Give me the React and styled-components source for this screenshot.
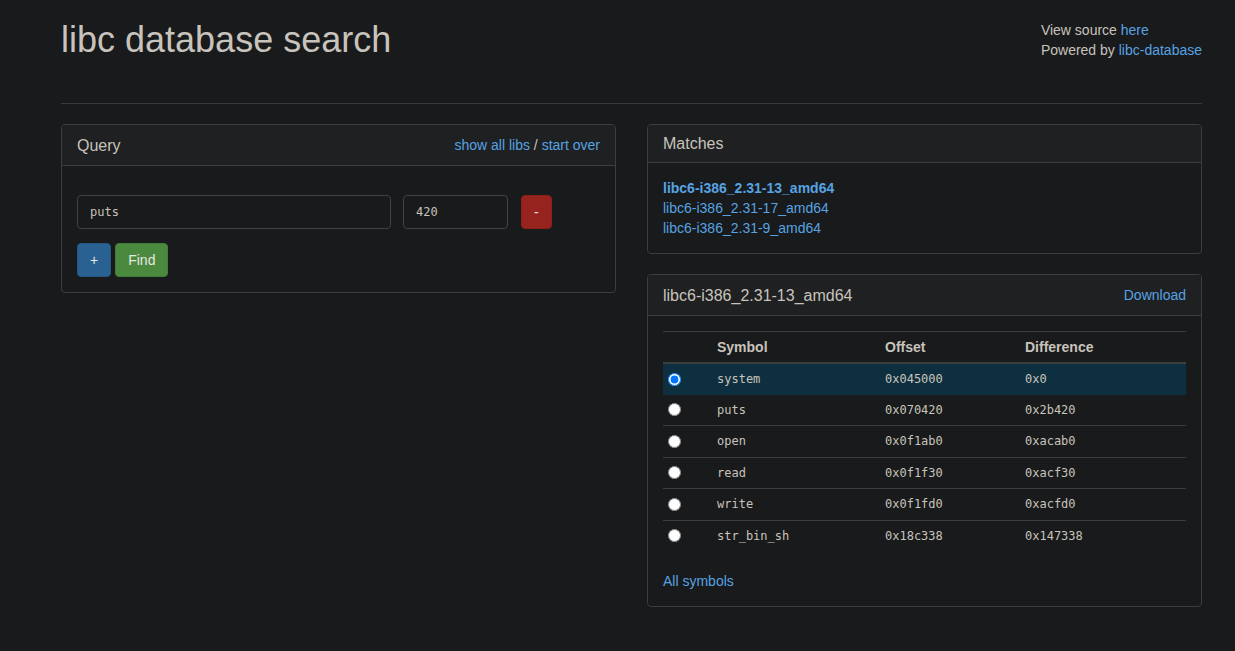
import styled, { createGlobalStyle } from 'styled-components';

const GlobalStyle = createGlobalStyle`
  body {
    margin: 0;
    background: #181a1b;
    color: #c8c3bc;
    font-family: "Liberation Sans", Arial, sans-serif;
    font-size: 14px;
    line-height: 20px;
  }
  a {
    color: #57a3e2;
    text-decoration: none;
  }
`;

const symbols = [
  { name: 'system', offset: '0x045000', diff: '0x0', selected: true },
  { name: 'puts', offset: '0x070420', diff: '0x2b420' },
  { name: 'open', offset: '0x0f1ab0', diff: '0xacab0' },
  { name: 'read', offset: '0x0f1f30', diff: '0xacf30' },
  { name: 'write', offset: '0x0f1fd0', diff: '0xacfd0' },
  { name: 'str_bin_sh', offset: '0x18c338', diff: '0x147338' },
];

const matches = ['libc6-i386_2.31-13_amd64', 'libc6-i386_2.31-17_amd64', 'libc6-i386_2.31-9_amd64'];

export default function App() {
  return (
    <>
      <GlobalStyle />
      <Container>
        <Header>
          <Title>libc database search</Title>
          <Meta>
            <div>
              View source <a href="#">here</a>
            </div>
            <div>
              Powered by <a href="#">libc-database</a>
            </div>
          </Meta>
        </Header>
        <Divider />
        <Columns>
          <div>
            <Panel>
              <PanelHeading $tall>
                <PanelTitle>Query</PanelTitle>
                <span>
                  <a href="#">show all libs</a> / <a href="#">start over</a>
                </span>
              </PanelHeading>
              <QueryBody>
                <FormRow>
                  <Input $width={314} defaultValue="puts" />
                  <Input $width={105} defaultValue="420" />
                  <Button $kind="danger">-</Button>
                </FormRow>
                <ButtonRow>
                  <Button $kind="primary">+</Button>
                  <Button $kind="success">Find</Button>
                </ButtonRow>
              </QueryBody>
            </Panel>
          </div>
          <div>
            <Panel>
              <PanelHeading>
                <PanelTitle>Matches</PanelTitle>
              </PanelHeading>
              <PanelBody>
                {matches.map((m, i) => (
                  <MatchLink key={m} href="#" $active={i === 0}>
                    {m}
                  </MatchLink>
                ))}
              </PanelBody>
            </Panel>
            <Panel>
              <PanelHeading $tall>
                <PanelTitle>libc6-i386_2.31-13_amd64</PanelTitle>
                <a href="#">Download</a>
              </PanelHeading>
              <PanelBody>
                <Table>
                  <colgroup>
                    <col style={{ width: 49 }} />
                    <col style={{ width: 168 }} />
                    <col style={{ width: 140 }} />
                    <col />
                  </colgroup>
                  <thead>
                    <tr>
                      <Th />
                      <Th>Symbol</Th>
                      <Th>Offset</Th>
                      <Th>Difference</Th>
                    </tr>
                  </thead>
                  <tbody>
                    {symbols.map((s) => (
                      <Row key={s.name} $selected={s.selected}>
                        <Td>
                          <Radio type="radio" name="sym" defaultChecked={s.selected} />
                        </Td>
                        <Td $mono>{s.name}</Td>
                        <Td $mono>{s.offset}</Td>
                        <Td $mono>{s.diff}</Td>
                      </Row>
                    ))}
                  </tbody>
                </Table>
                <AllSymbols href="#">All symbols</AllSymbols>
              </PanelBody>
            </Panel>
          </div>
        </Columns>
      </Container>
    </>
  );
}

const Container = styled.div`
  width: 1141px;
  margin-left: 61px;
`;
const Header = styled.div`
  display: flex;
  justify-content: space-between;
  align-items: flex-start;
  box-sizing: border-box;
  height: 103px;
  padding-top: 20px;
`;
const Title = styled.h1`
  margin: 0;
  font-size: 36px;
  line-height: 1.1;
  font-weight: 400;
  color: #c8c3bc;
`;
const Meta = styled.div`
  font-size: 14px;
  line-height: 20px;
`;
const Divider = styled.hr`
  margin: 0 0 20px;
  border: 0;
  border-top: 1px solid #363b3d;
`;
const Columns = styled.div`
  display: grid;
  grid-template-columns: 555px 555px;
  column-gap: 31px;
  align-items: start;
`;
const Panel = styled.div`
  border: 1px solid #3a3e41;
  border-radius: 4px;
  background: #181a1b;
  margin-bottom: 20px;
  overflow: hidden;
`;
const PanelHeading = styled.div`
  display: flex;
  justify-content: space-between;
  align-items: center;
  padding: 10px 15px;
  min-height: ${(p) => (p.$tall ? '20px' : '0')};
  background: #1e2022;
  border-bottom: 1px solid #3a3e41;
`;
const PanelTitle = styled.h3`
  margin: 0;
  font-size: 16px;
  line-height: 17px;
  font-weight: 400;
  color: #c8c3bc;
`;
const PanelBody = styled.div`
  padding: 15px;
`;
const QueryBody = styled.div`
  padding: 29px 15px 15px;
`;
const FormRow = styled.div`
  display: flex;
  align-items: center;
  gap: 12px;
  & > button {
    margin-left: 1px;
  }
`;
const ButtonRow = styled.div`
  display: flex;
  gap: 4px;
  margin-top: 14px;
`;
const Input = styled.input`
  box-sizing: border-box;
  width: ${(p) => p.$width}px;
  height: 34px;
  padding: 6px 12px;
  background: #181a1b;
  color: #c8c3bc;
  border: 1px solid #3e4446;
  border-radius: 4px;
  font-family: "DejaVu Sans Mono", "Liberation Mono", monospace;
  font-size: 12px;
  outline: none;
`;
const buttonColors = {
  primary: ['#296292', '#255783'],
  success: ['#4b8a3e', '#437c37'],
  danger: ['#97231f', '#8a201c'],
};
const Button = styled.button`
  box-sizing: border-box;
  height: 34px;
  padding: 6px 12px;
  font-family: "Liberation Sans", Arial, sans-serif;
  font-size: 14px;
  line-height: 20px;
  color: #e8e6e3;
  background: ${(p) => buttonColors[p.$kind][0]};
  border: 1px solid ${(p) => buttonColors[p.$kind][1]};
  border-radius: 4px;
  cursor: pointer;
`;
const MatchLink = styled.a`
  display: block;
  font-weight: ${(p) => (p.$active ? 700 : 400)};
`;
const Table = styled.table`
  width: 100%;
  border-collapse: collapse;
  table-layout: fixed;
`;
const Th = styled.th`
  text-align: left;
  padding: 5px;
  line-height: 20px;
  font-weight: 700;
  color: #c8c3bc;
  border-top: 1px solid #3a3e41;
  border-bottom: 2px solid #3a3e41;
`;
const Row = styled.tr`
  background: ${(p) => (p.$selected ? '#0e2f3f' : 'transparent')};
  & + & td {
    border-top: 1px solid #3a3e41;
  }
`;
const Td = styled.td`
  padding: 5px;
  height: 20.5px;
  line-height: 20px;
  vertical-align: middle;
  font-family: ${(p) => (p.$mono ? '"DejaVu Sans Mono", "Liberation Mono", monospace' : 'inherit')};
  font-size: ${(p) => (p.$mono ? '12px' : '14px')};
`;
const Radio = styled.input`
  display: block;
  margin: 0;
  width: 13px;
  height: 13px;
`;
const AllSymbols = styled.a`
  display: inline-block;
  margin-top: 20px;
`;
